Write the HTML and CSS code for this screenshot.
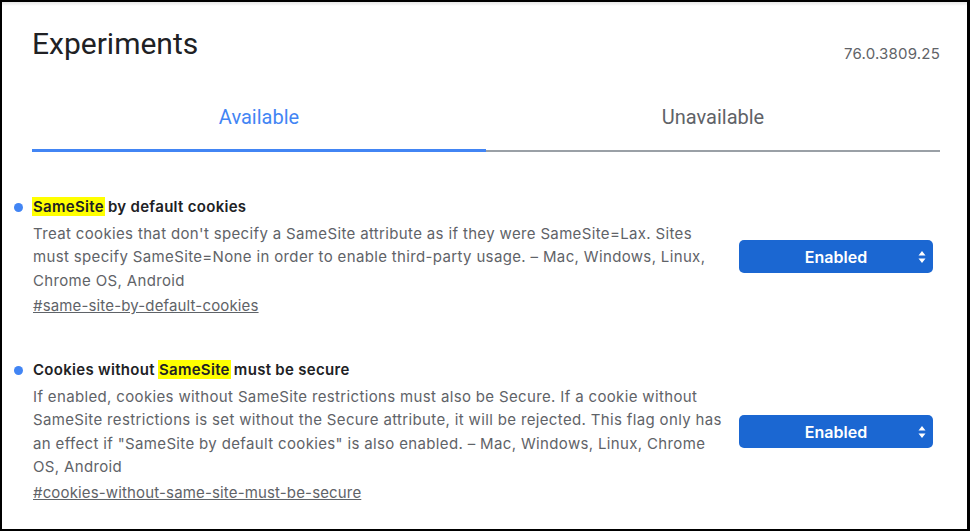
FILE: index.html
```html
<!DOCTYPE html>
<html lang="en">
<head>
<meta charset="utf-8">
<title>Experiments</title>
<link rel="stylesheet" href="styles.css">
</head>
<body>
<div class="frame">
  <header class="header">
    <h1 class="title">Experiments</h1>
    <span class="version">76.0.3809.25</span>
  </header>
  <nav class="tabs">
    <div class="tab tab-active">Available</div>
    <div class="tab">Unavailable</div>
  </nav>
  <section class="flags">
    <div class="flag">
      <div class="flag-main">
        <span class="dot"></span>
        <div class="flag-body">
          <div class="flag-name"><mark class="hl">SameSite</mark> by default cookies</div>
          <p class="flag-desc">Treat cookies that don't specify a SameSite attribute as if they were SameSite=Lax. Sites must specify SameSite=None in order to enable third-party usage. – Mac, Windows, Linux, Chrome OS, Android</p>
          <a class="flag-link" href="#same-site-by-default-cookies">#same-site-by-default-cookies</a>
        </div>
      </div>
      <div class="select">
        <span class="select-label">Enabled</span>
        <svg class="select-arrows" width="8" height="14" viewBox="0 0 8 14"><path d="M4 1 L7.5 5.5 H0.5 Z M4 13 L7.5 8.5 H0.5 Z" fill="#fff"/></svg>
      </div>
    </div>
    <div class="flag flag-second">
      <div class="flag-main">
        <span class="dot"></span>
        <div class="flag-body">
          <div class="flag-name">Cookies without <mark class="hl">SameSite</mark> must be secure</div>
          <p class="flag-desc">If enabled, cookies without SameSite restrictions must also be Secure. If a cookie without SameSite restrictions is set without the Secure attribute, it will be rejected. This flag only has an effect if "SameSite by default cookies" is also enabled. – Mac, Windows, Linux, Chrome OS, Android</p>
          <a class="flag-link" href="#cookies-without-same-site-must-be-secure">#cookies-without-same-site-must-be-secure</a>
        </div>
      </div>
      <div class="select">
        <span class="select-label">Enabled</span>
        <svg class="select-arrows" width="8" height="14" viewBox="0 0 8 14"><path d="M4 1 L7.5 5.5 H0.5 Z M4 13 L7.5 8.5 H0.5 Z" fill="#fff"/></svg>
      </div>
    </div>
  </section>
</div>
</body>
</html>
```
FILE: styles.css
```css
html, body {
  margin: 0;
  padding: 0;
  background: #fff;
}
body {
  font-family: Roboto, "Liberation Sans", Arial, sans-serif;
  color: #202124;
}
.frame {
  width: 970px;
  height: 531px;
  box-sizing: border-box;
  border-style: solid;
  border-color: #000;
  border-width: 2px 3px 2px 2px;
  background: linear-gradient(#e6e6e6, #ffffff 4px);
  overflow: hidden;
}
.header {
  display: flex;
  justify-content: space-between;
  align-items: flex-start;
  padding: 24px 27px 0 30px;
}
.title {
  margin: 0;
  font-size: 30px;
  line-height: 36px;
  font-weight: 400;
  color: #202124;
}
.version {
  margin-top: 18px;
  font-family: Inter, Roboto, sans-serif;
  font-size: 15px;
  line-height: 20px;
  letter-spacing: 0.2px;
  color: #5f6368;
}
.tabs {
  display: flex;
  margin: 41px 27px 0 30px;
  border-bottom: 2px solid #9aa0a6;
}
.tab {
  flex: 1;
  text-align: center;
  font-size: 20px;
  line-height: 24px;
  padding-bottom: 20px;
  color: #5f6368;
  margin-bottom: -2px;
  border-bottom: 3px solid transparent;
}
.tab-active {
  color: #4285f4;
  border-bottom-color: #4285f4;
}
.flags {
  padding: 45px 34px 0 12px;
}
.flag {
  display: flex;
  justify-content: space-between;
  align-items: center;
}
.flag-second {
  margin-top: 42.5px;
}
.flag-main {
  display: flex;
  align-items: flex-start;
}
.dot {
  width: 9px;
  height: 9px;
  border-radius: 50%;
  background: #4285f4;
  margin: 6px 10px 0 0;
  flex: none;
}
.flag-body {
  width: 698px;
}
.flag-name {
  font-family: Inter, Roboto, sans-serif;
  font-size: 15px;
  line-height: 20px;
  font-weight: 600;
  letter-spacing: 0.3px;
  color: #202124;
}
.hl {
  background: #ffff00;
  color: #202124;
  padding: 0 1px;
  margin: 0 -1px;
}
.flag-desc {
  margin: 5px 0 0;
  font-family: Inter, Roboto, sans-serif;
  font-size: 15px;
  line-height: 23.3px;
  letter-spacing: 0.35px;
  color: #5f6368;
}
.flag-link {
  display: inline-block;
  margin-top: 2.5px;
  font-family: Inter, Roboto, sans-serif;
  font-size: 15px;
  line-height: 23.3px;
  letter-spacing: 0.15px;
  color: #5f6368;
  text-decoration: underline;
}
.select {
  width: 194px;
  height: 33px;
  box-sizing: border-box;
  border-radius: 5px;
  background: #1b67d2;
  display: flex;
  align-items: center;
  justify-content: center;
  position: relative;
  flex: none;
  margin-bottom: 1px;
}
.select-label {
  color: #fff;
  font-family: Inter, Roboto, sans-serif;
  font-size: 16px;
  font-weight: 600;
}
.select-arrows {
  position: absolute;
  right: 7px;
  top: 10px;
}
```
